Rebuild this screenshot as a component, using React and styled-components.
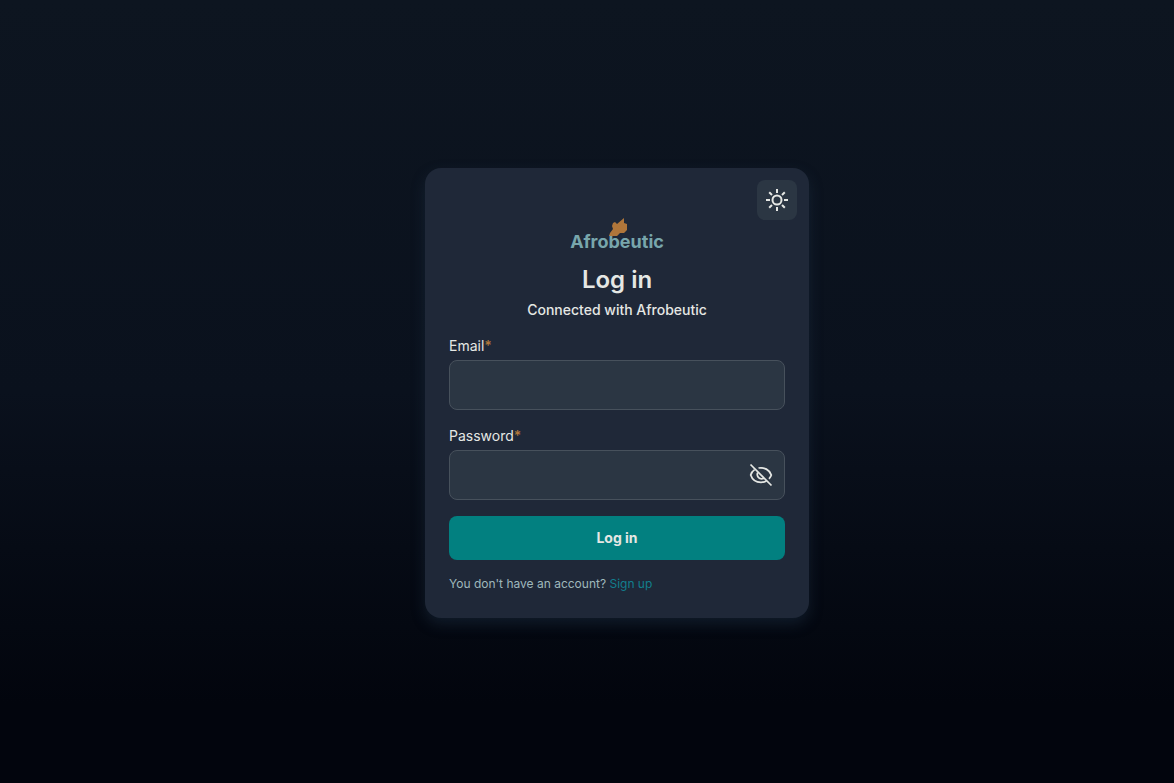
import React, { useState } from "react";
import styled, { createGlobalStyle } from "styled-components";

const App = () => {
  const [showPassword, setShowPassword] = useState(false);

  const handleSubmit = (e) => {
    e.preventDefault();
  };

  return (
    <>
      <GlobalStyle />
      <SWrapper>
        <SCard>
          <SThemeButton type="button" aria-label="Toggle theme">
            <SIcon viewBox="0 0 24 24" $stroke={2} aria-hidden="true">
              <circle cx="12" cy="12" r="4.5" />
              <path d="M12 1v4M12 19v4M1 12h4M19 12h4M4.200 4.200l2.800 2.800M17 17l2.800 2.800M4.200 19.800l2.800-2.800M17 7l2.800-2.800" />
            </SIcon>
          </SThemeButton>
          <SHeader>
            <SLogo>
              <SLogoText>Afrobeutic</SLogoText>
              <SLeaf viewBox="0 0 18 19" aria-hidden="true">
                <path d="M0 18 1 15 4 11 3 8 4 5 6 4 8 6 15 0 15 5 18 6 18 12 15 15 11 15 8 18Z" />
              </SLeaf>
            </SLogo>
            <STitle>Log in</STitle>
            <SSubtitle>Connected with Afrobeutic</SSubtitle>
          </SHeader>
          <SForm onSubmit={handleSubmit}>
            <SField>
              <SLabel htmlFor="email">
                Email<SRequired>*</SRequired>
              </SLabel>
              <SInputBox>
                <SInput id="email" name="email" type="email" />
              </SInputBox>
            </SField>
            <SField>
              <SLabel htmlFor="password">
                Password<SRequired>*</SRequired>
              </SLabel>
              <SInputBox>
                <SInput
                  id="password"
                  name="password"
                  type={showPassword ? "text" : "password"}
                />
                <SEyeButton
                  type="button"
                  aria-label="Toggle password visibility"
                  onClick={() => setShowPassword(!showPassword)}
                >
                  <SIcon viewBox="0 0 24 24" $stroke={1.75} aria-hidden="true">
                    {showPassword ? (
                      <>
                        <path d="M2 12C4 7.500 7.500 5 12 5s8 2.500 10 7c-2 4.500-5.500 7-10 7s-8-2.500-10-7Z" />
                        <circle cx="12" cy="12" r="3" />
                      </>
                    ) : (
                      <>
                        <path d="M1.500 1.500 22.500 22.500" />
                        <path d="M5.600 6.600C3.700 7.900 2.200 9.800 1.700 12c1.500 4.600 5.500 7.300 10.300 7.300 2 0 3.800-.4 5.400-1.300" />
                        <path d="M9.500 5c5.700-1.100 11 1.800 12.800 7-.4 1.400-1.200 2.700-2.300 3.800" />
                        <path d="M8.800 9.500c-1.500 2.900.5 6.300 3.700 6.300.9 0 1.700-.3 2.400-.8" />
                      </>
                    )}
                  </SIcon>
                </SEyeButton>
              </SInputBox>
            </SField>
            <SSubmit type="submit">Log in</SSubmit>
          </SForm>
          <SSignupText>
            You don't have an account? <SLink href="#signup">Sign up</SLink>
          </SSignupText>
        </SCard>
      </SWrapper>
    </>
  );
};

export default App;

const GlobalStyle = createGlobalStyle`
  * {
    box-sizing: border-box;
  }

  body {
    margin: 0;
    font-family: Inter, "Liberation Sans", sans-serif;
    color: #e5e7e4;
    background: #02050d;
  }
`;

const SWrapper = styled.main`
  display: flex;
  align-items: center;
  justify-content: center;
  min-height: 100vh;
  padding: 2px 0 0 60px;
  background: linear-gradient(180deg, #0d1520 0%, #0a111d 50%, #02050d 90%);
`;

const SCard = styled.section`
  position: relative;
  width: 100%;
  max-width: 384px;
  padding: 48px 24px 24px;
  border-radius: 16px;
  background: #1f2838;
  box-shadow: 0 6px 14px rgba(31, 50, 72, 0.45);
`;

const SIcon = styled.svg`
  width: 24px;
  height: 24px;
  fill: none;
  stroke: currentColor;
  stroke-width: ${({ $stroke }) => $stroke};
`;

const SThemeButton = styled.button`
  position: absolute;
  top: 12px;
  right: 12px;
  display: flex;
  align-items: center;
  justify-content: center;
  width: 40px;
  height: 40px;
  padding: 0;
  border: none;
  border-radius: 8px;
  color: #e5e7e4;
  background: #2b3643;
  cursor: pointer;
`;

const SHeader = styled.header`
  display: flex;
  flex-direction: column;
  align-items: center;
`;

const SLogo = styled.div`
  position: relative;
  padding-top: 14px;
`;

const SLeaf = styled.svg`
  position: absolute;
  top: 2px;
  left: 39px;
  width: 18px;
  height: 19px;
  fill: #b0763a;
`;

const SLogoText = styled.span`
  display: block;
  font-size: 18px;
  font-weight: 700;
  line-height: 24px;
  color: #78a6ac;
`;

const STitle = styled.h1`
  margin: 10px 0 0;
  font-size: 24px;
  font-weight: 600;
  line-height: 32px;
`;

const SSubtitle = styled.p`
  margin: 4px 0 0;
  font-size: 14px;
  font-weight: 500;
  line-height: 20px;
`;

const SForm = styled.form`
  display: flex;
  flex-direction: column;
  gap: 16px;
  margin-top: 16px;
`;

const SField = styled.div`
  display: flex;
  flex-direction: column;
  gap: 4px;
`;

const SLabel = styled.label`
  font-size: 14px;
  line-height: 20px;
`;

const SRequired = styled.span`
  font-weight: 600;
  color: #b0763a;
`;

const SInputBox = styled.div`
  display: flex;
  align-items: center;
  height: 50px;
  border: 1px solid #47515c;
  border-radius: 8px;
  background: #2b3643;
`;

const SInput = styled.input`
  flex: 1;
  min-width: 0;
  height: 100%;
  padding: 0 12px;
  border: none;
  outline: none;
  font: inherit;
  font-size: 16px;
  color: inherit;
  background: transparent;
`;

const SEyeButton = styled.button`
  display: flex;
  margin-right: 11px;
  padding: 0;
  border: none;
  color: #e5e7e4;
  background: transparent;
  cursor: pointer;
`;

const SSubmit = styled.button`
  height: 44px;
  border: none;
  border-radius: 8px;
  font-family: inherit;
  font-size: 14px;
  font-weight: 700;
  color: #e5e7e4;
  background: #028080;
  cursor: pointer;
`;

const SSignupText = styled.p`
  margin: 14px 0 0;
  font-size: 12px;
  line-height: 20px;
  color: #9fb8bc;
`;

const SLink = styled.a`
  color: #127f8e;
  text-decoration: none;
`;
